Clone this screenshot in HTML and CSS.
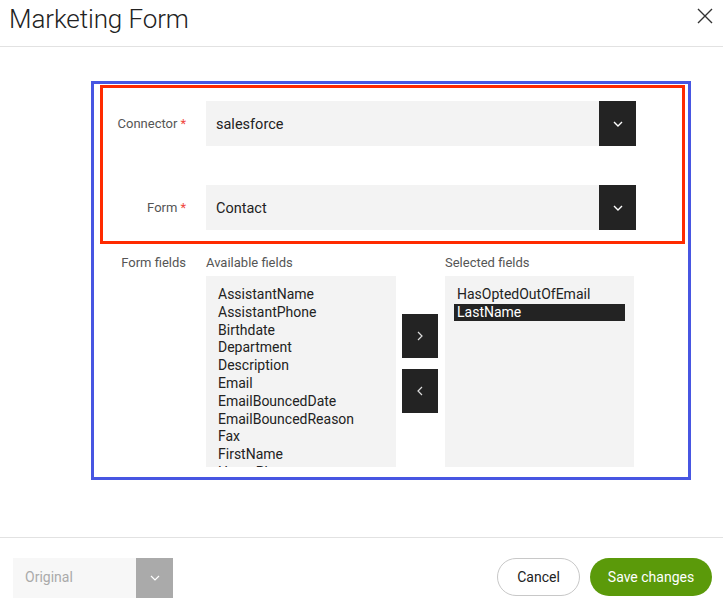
FILE: index.html
```html
<!DOCTYPE html>
<html>
<head>
<meta charset="utf-8">
<link rel="stylesheet" href="styles.css">
</head>
<body>
<div class="modal">
  <header class="head">
    <h1 class="title">Marketing Form</h1>
    <button class="close" aria-label="Close">
      <svg width="18" height="18" viewBox="0 0 18 18"><path d="M2 2L16 16M16 2L2 16" stroke="#333" stroke-width="1.4" fill="none"/></svg>
    </button>
  </header>
  <main class="body">
    <div class="outer">
      <div class="inner">
        <div class="row">
          <label class="lbl">Connector<span class="req">*</span></label>
          <div class="select">
            <span class="val">salesforce</span>
            <span class="sbtn"><svg width="12" height="8" viewBox="0 0 12 8"><path d="M2 2L6 6L10 2" stroke="#fff" stroke-width="1.4" fill="none"/></svg></span>
          </div>
        </div>
        <div class="row">
          <label class="lbl">Form<span class="req">*</span></label>
          <div class="select">
            <span class="val">Contact</span>
            <span class="sbtn"><svg width="12" height="8" viewBox="0 0 12 8"><path d="M2 2L6 6L10 2" stroke="#fff" stroke-width="1.4" fill="none"/></svg></span>
          </div>
        </div>
      </div>
      <div class="fields">
        <div class="flbl">Form fields</div>
        <div class="col">
          <div class="colhead">Available fields</div>
          <ul class="list">
            <li>AssistantName</li>
            <li>AssistantPhone</li>
            <li>Birthdate</li>
            <li>Department</li>
            <li>Description</li>
            <li>Email</li>
            <li>EmailBouncedDate</li>
            <li>EmailBouncedReason</li>
            <li>Fax</li>
            <li>FirstName</li>
            <li>HomePhone</li>
          </ul>
        </div>
        <div class="moves">
          <button class="mv"><svg width="10" height="14" viewBox="0 0 10 14"><path d="M3 3L7 7L3 11" stroke="#ddd" stroke-width="1.2" fill="none"/></svg></button>
          <button class="mv"><svg width="10" height="14" viewBox="0 0 10 14"><path d="M7 3L3 7L7 11" stroke="#ddd" stroke-width="1.2" fill="none"/></svg></button>
        </div>
        <div class="col">
          <div class="colhead">Selected fields</div>
          <ul class="list sel">
            <li>HasOptedOutOfEmail</li>
            <li class="on">LastName</li>
          </ul>
        </div>
      </div>
    </div>
  </main>
  <footer class="foot">
    <div class="ver">
      <span class="vval">Original</span>
      <span class="vbtn"><svg width="12" height="8" viewBox="0 0 12 8"><path d="M2 2L6 6L10 2" stroke="#fff" stroke-width="1.2" fill="none"/></svg></span>
    </div>
    <div class="actions">
      <button class="cancel">Cancel</button>
      <button class="save">Save changes</button>
    </div>
  </footer>
</div>
</body>
</html>
```

FILE: styles.css
```css
* { box-sizing: border-box; }
html, body { margin: 0; padding: 0; background: #fff; }
body { font-family: Roboto, "Noto Sans", sans-serif; color: #222; width: 723px; height: 598px; overflow: hidden; }
.modal { width: 723px; height: 598px; display: flex; flex-direction: column; }
.head { height: 47px; border-bottom: 1px solid #e2e2e2; display: flex; align-items: flex-start; justify-content: space-between; padding: 0 9px 0 9px; }
.title { margin: 3px 0 0 0; font-size: 26px; font-weight: 300; color: #222; line-height: 33px; letter-spacing: -0.1px; }
.close { background: none; border: 0; padding: 0; margin: 7px 0 0 0; width: 18px; height: 18px; }
.body { height: 490px; padding: 34px 0 0 91px; }
.outer { width: 600px; height: 399px; border: 3px solid #4756e2; padding: 1px 4px 0 6px; }
.inner { width: 585px; height: 159px; border: 3px solid #ff2a00; padding: 13px 0 0 0; display: flex; flex-direction: column; gap: 39px; }
.row { display: flex; align-items: center; gap: 20px; }
.lbl { width: 83px; text-align: right; font-size: 13px; color: #555; padding-bottom: 1px; }
.req { color: #f0473d; margin-left: 3px; }
.select { width: 430px; height: 45px; background: #f3f3f3; display: flex; align-items: center; justify-content: space-between; }
.val { padding-left: 10px; padding-top: 2px; font-size: 14.5px; color: #222; }
.sbtn { width: 37px; height: 45px; background: #232323; display: flex; align-items: center; justify-content: center; }
.fields { display: flex; margin-left: -6px; padding-top: 11px; }
.flbl { width: 92px; text-align: right; font-size: 13px; color: #555; line-height: 16px; }
.col { display: flex; flex-direction: column; margin-left: 20px; }
.col:last-child { margin-left: 7px; }
.colhead { font-size: 13px; color: #555; line-height: 16px; height: 21px; }
.list { list-style: none; margin: 0; padding: 10px 9px; width: 190px; height: 191px; background: #f3f3f3; overflow: hidden; font-size: 14px; color: #222; }
.sel { width: 189px; }
.list li { line-height: 17.8px; padding: 0 3px; white-space: nowrap; }
.list li.on { background: #232323; color: #fff; line-height: 17px; }
.moves { display: flex; flex-direction: column; gap: 11px; margin-left: 6px; padding-top: 59px; }
.mv { width: 36px; height: 44px; background: #232323; border: 0; padding: 0; display: flex; align-items: center; justify-content: center; }
.foot { border-top: 1px solid #e2e2e2; flex: 1; display: flex; justify-content: space-between; align-items: flex-start; padding: 20px 11px 0 13px; }
.ver { width: 160px; height: 40px; background: #f7f7f7; display: flex; justify-content: space-between; align-items: center; }
.vval { padding-left: 12px; padding-bottom: 3px; font-size: 14px; color: #aaa; }
.vbtn { width: 37px; height: 40px; background: #aaa; display: flex; align-items: center; justify-content: center; }
.actions { display: flex; gap: 10px; }
.cancel { width: 83px; height: 38px; border-radius: 19px; background: #fff; border: 1px solid #c8c8c8; font-family: Roboto, sans-serif; font-size: 14px; color: #222; padding-bottom: 2px; }
.save { width: 122px; height: 38px; border-radius: 19px; background: #5b9a0a; border: 0; font-family: Roboto, sans-serif; font-size: 14px; color: #fff; padding-bottom: 2px; }
```
